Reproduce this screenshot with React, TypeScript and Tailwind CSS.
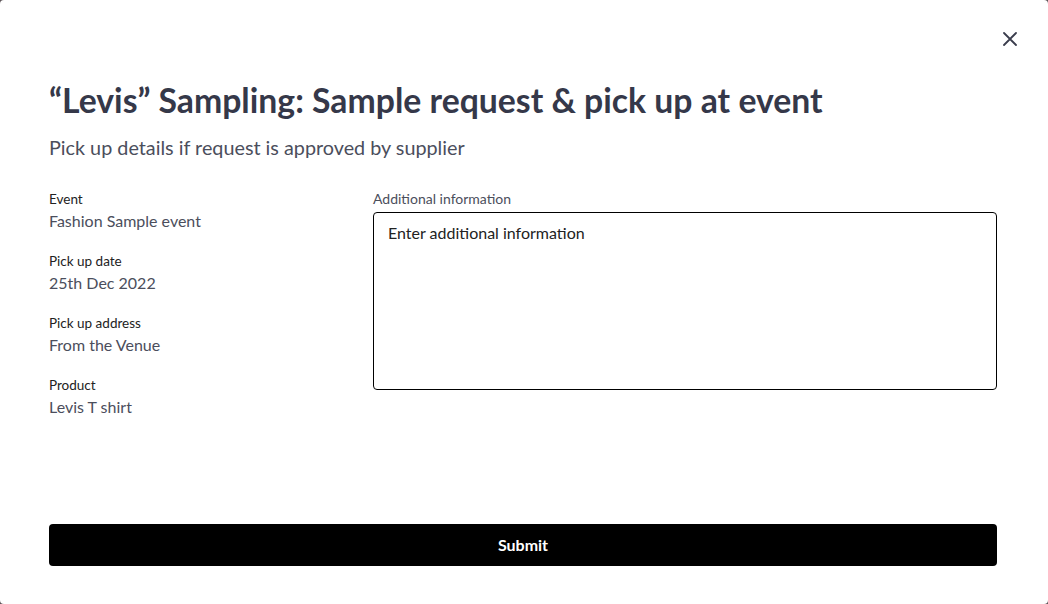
import React from 'react';

const FONT = { fontFamily: 'Lato, "Noto Sans", sans-serif' };

const details = [
  { label: 'Event', value: 'Fashion Sample event' },
  { label: 'Pick up date', value: '25th Dec 2022' },
  { label: 'Pick up address', value: 'From the Venue' },
  { label: 'Product', value: 'Levis T shirt' },
];

export default function App() {
  const [info, setInfo] = React.useState('');

  return (
    <div className="w-[1048px] h-[604px] bg-[#5c5458]" style={FONT}>
      <div className="relative w-full h-full bg-white rounded-[4px] flex flex-col pl-[49px] pr-[51px] pt-[80px] pb-[38px]">
        {/* close */}
        <button className="absolute top-[32px] right-[31px] w-[14px] h-[14px] text-[#3a3d4d]">
          <svg viewBox="0 0 14 14" width="14" height="14" fill="none" stroke="currentColor" strokeWidth="1.8" strokeLinecap="round">
            <path d="M1 1L13 13M13 1L1 13" />
          </svg>
        </button>

        <h1 className="text-[33.75px] leading-[40px] font-bold text-[#353849]">
          “Levis” Sampling: Sample request &amp; pick up at event
        </h1>
        <p className="mt-[13px] text-[19.8px] leading-[28px] text-[#4b4e5c]">
          Pick up details if request is approved by supplier
        </p>

        <div className="mt-[29px] flex">
          <div className="w-[324px] flex flex-col gap-[20px]">
            {details.map((d) => (
              <div key={d.label}>
                <div className="text-[13.5px] leading-[18px] text-[#222]">{d.label}</div>
                <div className="mt-[2px] text-[16px] leading-[22px] text-[#4b4e5c]">{d.value}</div>
              </div>
            ))}
          </div>

          <div className="flex-1">
            <label className="block text-[14px] leading-[18px] text-[#4b4e5c]">Additional information</label>
            <textarea
              value={info}
              onChange={(e) => setInfo(e.target.value)}
              placeholder="Enter additional information"
              className="mt-[4px] block w-full h-[178px] resize-none border border-black rounded-[4px] px-[14px] py-[8px] text-[16px] leading-[24px] text-[#222] placeholder:text-[#222] outline-none"
            />
          </div>
        </div>

        <div className="flex-1" />

        <button className="w-full h-[42px] bg-black text-white rounded-[4px] text-[16px] font-bold">
          Submit
        </button>
      </div>
    </div>
  );
}
